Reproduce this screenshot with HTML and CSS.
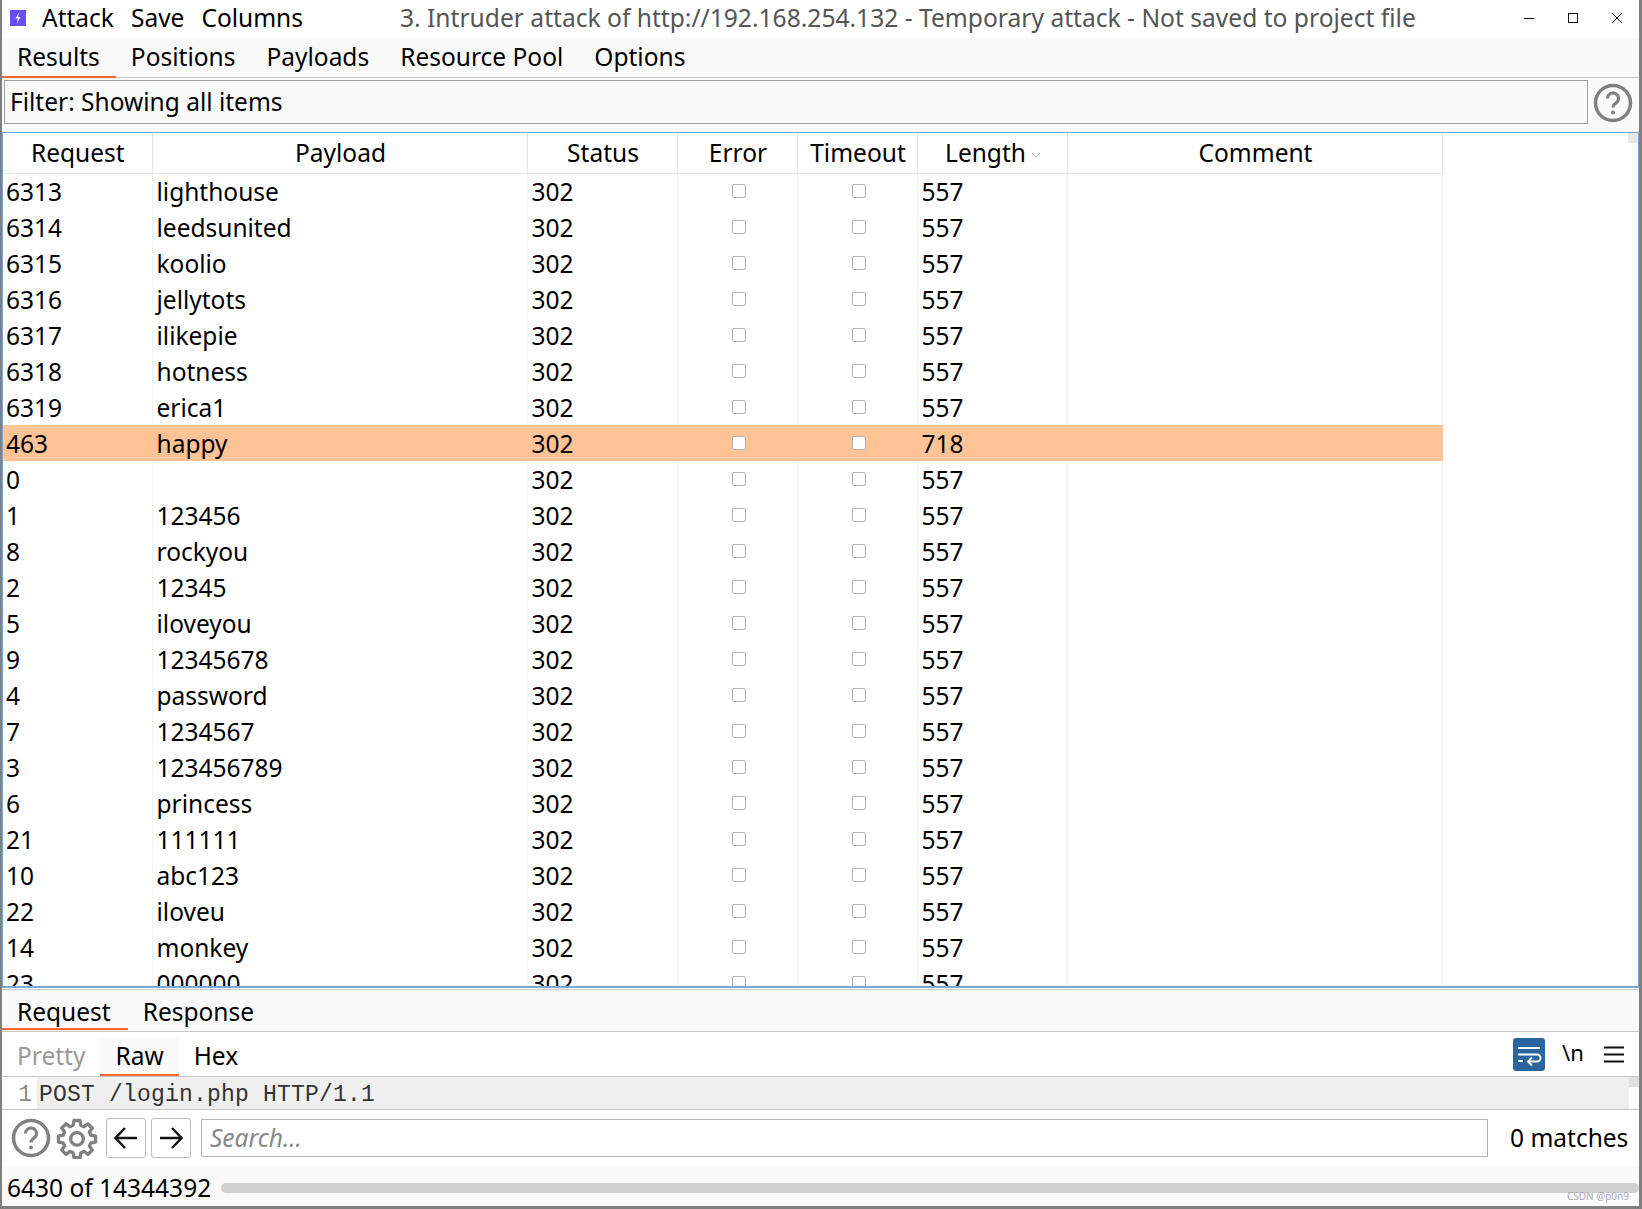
FILE: index.html
```html
<!DOCTYPE html>
<html lang="en">
<head>
    <meta charset="UTF-8">
    <title>Intruder attack</title>
    <link rel="stylesheet" href="styles.css">
</head>
<body>
    <div class="window">
        <div class="titlebar">
            <svg class="app-icon" width="16" height="16" viewBox="0 0 16 16"><rect width="16" height="16" fill="#6a4df5"/><path d="M9 2.5 5.5 8.5H8L6.8 13.5 10.5 7H8z" fill="#fff"/></svg>
            <div class="menu">
                <span>Attack</span>
                <span>Save</span>
                <span>Columns</span>
            </div>
            <div class="window-title">3. Intruder attack of http://192.168.254.132 - Temporary attack - Not saved to project file</div>
            <div class="window-controls">
                <svg width="10" height="10" viewBox="0 0 10 10"><path d="M0 5.5H10" stroke="#111" fill="none"/></svg>
                <svg width="10" height="10" viewBox="0 0 10 10"><rect x=".5" y=".5" width="9" height="9" stroke="#111" fill="none"/></svg>
                <svg width="10" height="10" viewBox="0 0 10 10"><path d="M0 0 10 10M10 0 0 10" stroke="#111" fill="none"/></svg>
            </div>
        </div>

        <div class="tabs main-tabs">
            <div class="tab active">Results</div>
            <div class="tab">Positions</div>
            <div class="tab">Payloads</div>
            <div class="tab">Resource Pool</div>
            <div class="tab">Options</div>
        </div>

        <div class="filter-row">
            <div class="filter-box">Filter: Showing all items</div>
            <svg class="help-icon" width="40" height="40" viewBox="0 0 40 40"><circle cx="20" cy="20" r="17.5" fill="none" stroke="#808080" stroke-width="3.5"/><path d="M14.5 15.5a5.5 5.5 0 1 1 8.5 4.6c-2 1.3-3 2.2-3 4.4" fill="none" stroke="#808080" stroke-width="3"/><circle cx="20" cy="29.5" r="2" fill="#808080"/></svg>
        </div>

        <div class="table-wrap">
            <div class="scroll-thumb"></div>
            <table class="results">
                <thead>
                    <tr>
                        <th class="col-md">Request</th>
                        <th class="col-lg">Payload</th>
                        <th class="col-md">Status</th>
                        <th class="col-sm">Error</th>
                        <th class="col-sm">Timeout</th>
                        <th class="col-md">Length<svg class="sort-arrow" width="10" height="6" viewBox="0 0 10 6"><path d="M1 1 5 5 9 1" fill="none" stroke="#bbb"/></svg></th>
                        <th class="col-lg">Comment</th>
                    </tr>
                </thead>
                <tbody>
                    <tr><td>6313</td><td>lighthouse</td><td>302</td><td class="chk"><i></i></td><td class="chk"><i></i></td><td>557</td><td></td></tr>
                    <tr><td>6314</td><td>leedsunited</td><td>302</td><td class="chk"><i></i></td><td class="chk"><i></i></td><td>557</td><td></td></tr>
                    <tr><td>6315</td><td>koolio</td><td>302</td><td class="chk"><i></i></td><td class="chk"><i></i></td><td>557</td><td></td></tr>
                    <tr><td>6316</td><td>jellytots</td><td>302</td><td class="chk"><i></i></td><td class="chk"><i></i></td><td>557</td><td></td></tr>
                    <tr><td>6317</td><td>ilikepie</td><td>302</td><td class="chk"><i></i></td><td class="chk"><i></i></td><td>557</td><td></td></tr>
                    <tr><td>6318</td><td>hotness</td><td>302</td><td class="chk"><i></i></td><td class="chk"><i></i></td><td>557</td><td></td></tr>
                    <tr><td>6319</td><td>erica1</td><td>302</td><td class="chk"><i></i></td><td class="chk"><i></i></td><td>557</td><td></td></tr>
                    <tr class="hit"><td>463</td><td>happy</td><td>302</td><td class="chk"><i></i></td><td class="chk"><i></i></td><td>718</td><td></td></tr>
                    <tr><td>0</td><td></td><td>302</td><td class="chk"><i></i></td><td class="chk"><i></i></td><td>557</td><td></td></tr>
                    <tr><td>1</td><td>123456</td><td>302</td><td class="chk"><i></i></td><td class="chk"><i></i></td><td>557</td><td></td></tr>
                    <tr><td>8</td><td>rockyou</td><td>302</td><td class="chk"><i></i></td><td class="chk"><i></i></td><td>557</td><td></td></tr>
                    <tr><td>2</td><td>12345</td><td>302</td><td class="chk"><i></i></td><td class="chk"><i></i></td><td>557</td><td></td></tr>
                    <tr><td>5</td><td>iloveyou</td><td>302</td><td class="chk"><i></i></td><td class="chk"><i></i></td><td>557</td><td></td></tr>
                    <tr><td>9</td><td>12345678</td><td>302</td><td class="chk"><i></i></td><td class="chk"><i></i></td><td>557</td><td></td></tr>
                    <tr><td>4</td><td>password</td><td>302</td><td class="chk"><i></i></td><td class="chk"><i></i></td><td>557</td><td></td></tr>
                    <tr><td>7</td><td>1234567</td><td>302</td><td class="chk"><i></i></td><td class="chk"><i></i></td><td>557</td><td></td></tr>
                    <tr><td>3</td><td>123456789</td><td>302</td><td class="chk"><i></i></td><td class="chk"><i></i></td><td>557</td><td></td></tr>
                    <tr><td>6</td><td>princess</td><td>302</td><td class="chk"><i></i></td><td class="chk"><i></i></td><td>557</td><td></td></tr>
                    <tr><td>21</td><td>111111</td><td>302</td><td class="chk"><i></i></td><td class="chk"><i></i></td><td>557</td><td></td></tr>
                    <tr><td>10</td><td>abc123</td><td>302</td><td class="chk"><i></i></td><td class="chk"><i></i></td><td>557</td><td></td></tr>
                    <tr><td>22</td><td>iloveu</td><td>302</td><td class="chk"><i></i></td><td class="chk"><i></i></td><td>557</td><td></td></tr>
                    <tr><td>14</td><td>monkey</td><td>302</td><td class="chk"><i></i></td><td class="chk"><i></i></td><td>557</td><td></td></tr>
                    <tr><td>23</td><td>000000</td><td>302</td><td class="chk"><i></i></td><td class="chk"><i></i></td><td>557</td><td></td></tr>
                </tbody>
            </table>
        </div>

        <div class="tabs detail-tabs">
            <div class="tab active">Request</div>
            <div class="tab">Response</div>
        </div>

        <div class="view-row">
            <div class="view-tab muted">Pretty</div>
            <div class="view-tab active">Raw</div>
            <div class="view-tab">Hex</div>
            <div class="view-tools">
                <div class="wrap-btn">
                    <svg width="32" height="33" viewBox="0 0 32 33"><path d="M5 10H27M5 23H10M5 16.5H24a3.5 3.5 0 0 1 0 7H16" fill="none" stroke="#fff" stroke-width="2"/><path d="M19 19.5 15 23.5 19 27.5" fill="none" stroke="#fff" stroke-width="2"/></svg>
                </div>
                <span class="newline-btn">\n</span>
                <svg width="20" height="17" viewBox="0 0 20 17"><path d="M0 1.5H20M0 8.5H20M0 15.5H20" stroke="#111" stroke-width="2" fill="none"/></svg>
            </div>
        </div>

        <div class="editor">
            <div class="gutter">1</div>
            <div class="code">POST /login.php HTTP/1.1</div>
            <div class="editor-thumb"></div>
        </div>

        <div class="search-row">
            <svg class="help-icon" width="40" height="40" viewBox="0 0 40 40"><circle cx="20" cy="20" r="17.5" fill="none" stroke="#808080" stroke-width="3.5"/><path d="M14.5 15.5a5.5 5.5 0 1 1 8.5 4.6c-2 1.3-3 2.2-3 4.4" fill="none" stroke="#808080" stroke-width="3"/><circle cx="20" cy="29.5" r="2" fill="#808080"/></svg>
            <svg class="gear" width="42" height="42" viewBox="0 0 24 24"><path d="M10.3 2h3.4l.5 2.7 1.8.8 2.3-1.6 2.4 2.4-1.6 2.3.8 1.8 2.7.5v3.4l-2.7.5-.8 1.8 1.6 2.3-2.4 2.4-2.3-1.6-1.8.8-.5 2.7h-3.4l-.5-2.7-1.8-.8-2.3 1.6-2.4-2.4 1.6-2.3-.8-1.8-2.7-.5v-3.4l2.7-.5.8-1.8-1.6-2.3 2.4-2.4 2.3 1.6 1.8-.8z" fill="none" stroke="#808080" stroke-width="1.9" stroke-linejoin="round"/><circle cx="12" cy="12.5" r="3.6" fill="none" stroke="#808080" stroke-width="1.9"/></svg>
            <button class="nav-btn"><svg width="24" height="24" viewBox="0 0 24 24"><path d="M23 12H2M11 2 1.5 12 11 22" fill="none" stroke="#111" stroke-width="2.4"/></svg></button>
            <button class="nav-btn"><svg width="24" height="24" viewBox="0 0 24 24"><path d="M1 12H22M13 2 22.5 12 13 22" fill="none" stroke="#111" stroke-width="2.4"/></svg></button>
            <div class="search-input">Search...</div>
            <div class="matches">0 matches</div>
        </div>

        <div class="status-row">
            <div class="progress-text">6430 of 14344392</div>
            <div class="progress-bar"></div>
            <div class="watermark">CSDN @p0n9</div>
        </div>
    </div>
</body>
</html>
```

FILE: styles.css
```css
:root {
    --panel-bg: #fafafa;
    --line-color: #c8c8c8;
    --accent: #ff6633;
    --cell-line: #e6e6e6;
}

* {
    box-sizing: border-box;
}

html, body {
    margin: 0;
    padding: 0;
}

body {
    font-family: "Noto Sans", "Open Sans", sans-serif;
    font-size: 24.5px;
    color: #000;
    background: #fff;
}

.window {
    width: 1642px;
    height: 1209px;
    display: flex;
    flex-direction: column;
    border-left: 2px solid #808080;
    border-right: 3px solid #808080;
    border-bottom: 3px solid #808080;
    overflow: hidden;
}

.titlebar {
    height: 38px;
    flex: none;
    display: flex;
    align-items: center;
    background: #fff;
    padding-bottom: 3px;
}

.app-icon {
    margin-left: 8px;
    margin-right: 16px;
}

.menu {
    display: flex;
    gap: 17px;
    padding-bottom: 1px;
}

.window-title {
    margin-left: 97px;
    padding-bottom: 1px;
    font-size: 24.6px;
    color: #555;
    white-space: nowrap;
}

.window-controls {
    margin-left: auto;
    margin-right: 17px;
    display: flex;
    gap: 34px;
}

.tabs {
    flex: none;
    display: flex;
    background: var(--panel-bg);
    border-bottom: 1px solid var(--line-color);
}

.main-tabs {
    height: 40px;
}

.tab {
    padding: 0 16px 0 15px;
    line-height: 38px;
    height: 40px;
}

.tab.active {
    border-bottom: 2px solid var(--accent);
}

.filter-row {
    height: 54px;
    flex: none;
    display: flex;
    background: var(--panel-bg);
    padding: 2px 6px 0 2px;
    justify-content: space-between;
}

.filter-box {
    width: 1584px;
    height: 44px;
    border: 1px solid #a0a0a0;
    padding: 1px 0 0 5px;
    line-height: 40px;
}

.filter-row .help-icon {
    margin-top: 3px;
}

.table-wrap {
    position: relative;
    height: 856px;
    flex: none;
    overflow: hidden;
    background: #fff;
    border-top: 1px solid #7aa7d9;
    border-bottom: 2px solid #7aa7d9;
    border-right: 1px solid #7aa7d9;
    border-left: 1px solid #7aa7d9;
}

.scroll-thumb {
    position: absolute;
    right: 0;
    top: 0;
    width: 10px;
    height: 10px;
    background: #e6e6e6;
}

.results {
    table-layout: fixed;
    border-collapse: collapse;
    width: 1440px;
    margin-left: -1px;
}

.col-sm {
    width: 120px;
}

.col-md {
    width: 150px;
}

.col-lg {
    width: 375px;
}

.results th {
    height: 40px;
    padding: 0 0 0 2px;
    font-weight: 400;
    text-align: center;
    border-right: 1px solid var(--cell-line);
    border-bottom: 1px solid var(--cell-line);
    line-height: 34px;
}

.sort-arrow {
    margin-left: 5px;
    vertical-align: middle;
}

.results td {
    height: 36px;
    padding: 1px 0 0 4px;
    line-height: 34px;
    white-space: nowrap;
    border-right: 1px solid #f3f3f3;
}

.results td.chk {
    padding: 0 0 0 4px;
}

.chk i {
    display: block;
    width: 14px;
    height: 14px;
    margin: 0 auto;
    background: #fff;
    border: 1px solid #b4b4b4;
    border-radius: 2px;
}

.hit td {
    background: #ffc396;
    border-right-color: #ffc396;
}

.detail-tabs {
    height: 43px;
    margin-top: 1px;
    border-top: 1px solid var(--line-color);
}

.detail-tabs .tab {
    padding: 3px 17px 0 15px;
}

.view-row {
    height: 44px;
    flex: none;
    display: flex;
    align-items: flex-end;
    background: #fff;
}

.view-tab {
    height: 38px;
    line-height: 36px;
    padding: 0 15px;
}

.view-tab.active {
    padding-right: 15px;
    background: var(--panel-bg);
    border-bottom: 2px solid var(--accent);
}

.view-tab.muted {
    color: #999;
}

.view-tools {
    margin-left: auto;
    align-self: center;
    margin-right: 15px;
    display: flex;
    align-items: center;
    gap: 17px;
}

.wrap-btn {
    width: 32px;
    height: 33px;
    background: #2a659f;
    border-radius: 3px;
    display: flex;
}

.newline-btn {
    font-size: 22px;
    line-height: 26px;
    width: 25px;
    padding-bottom: 4px;
}

.editor {
    position: relative;
    height: 34px;
    flex: none;
    display: flex;
    background: #fff;
    border-top: 1px solid var(--line-color);
    border-bottom: 1px solid var(--line-color);
}

.gutter {
    width: 35px;
    text-align: right;
    padding: 4px 5px 0 0;
    color: #888;
    font-family: "Liberation Mono", monospace;
    font-size: 23px;
    line-height: 28px;
}

.code {
    width: 1592px;
    background: #efefef;
    font-family: "Liberation Mono", monospace;
    font-size: 23px;
    letter-spacing: 0.2px;
    line-height: 28px;
    color: #333;
    padding: 4px 0 0 2px;
}

.editor-thumb {
    position: absolute;
    right: 0;
    top: 0;
    width: 10px;
    height: 10px;
    background: #e0e0e0;
}

.search-row {
    height: 56px;
    flex: none;
    display: flex;
    align-items: center;
    background: #fff;
    padding-left: 9px;
}

.gear {
    margin-left: 5px;
}

.nav-btn {
    width: 40px;
    height: 40px;
    margin-left: 8px;
    padding: 0;
    border: 1px solid #bbb;
    border-radius: 3px;
    background: #fff;
    display: flex;
    align-items: center;
    justify-content: center;
}

.nav-btn + .nav-btn {
    margin-left: 5px;
}

.search-input {
    width: 1287px;
    height: 38px;
    margin-left: 10px;
    border: 1px solid #b4b4b4;
    color: #888;
    font-style: italic;
    padding-left: 8px;
    line-height: 36px;
}

.matches {
    margin-left: 22px;
    padding-bottom: 2px;
    white-space: nowrap;
}

.status-row {
    position: relative;
    flex: 1;
    display: flex;
    align-items: center;
    background: var(--panel-bg);
    padding: 3px 0 0 5px;
}

.progress-text {
    white-space: nowrap;
    line-height: 36px;
}

.progress-bar {
    flex: 1;
    height: 10px;
    margin-left: 10px;
    background: #cfcfcf;
    border-radius: 5px;
}

.watermark {
    position: absolute;
    right: 10px;
    bottom: 4px;
    font-size: 10px;
    line-height: 12px;
    color: #aaa;
}
```
